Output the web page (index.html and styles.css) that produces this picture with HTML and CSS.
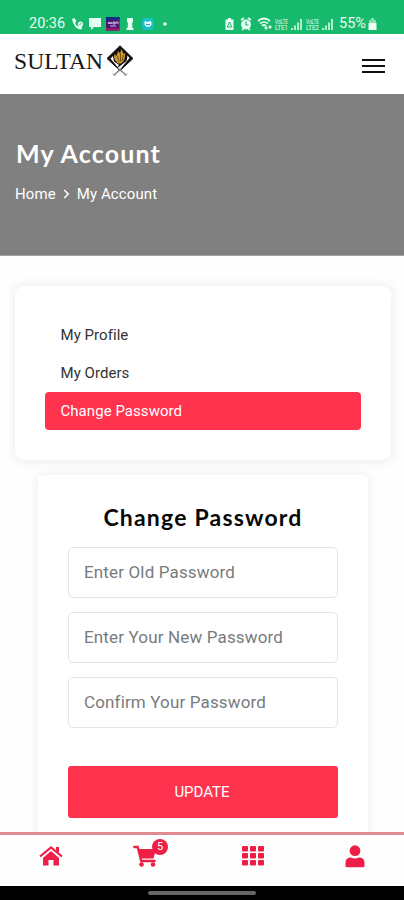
FILE: index.html
```
<!DOCTYPE html>
<html lang="en">
<head>
<meta charset="utf-8">
<meta name="viewport" content="width=device-width, initial-scale=1">
<title>My Account</title>
<link rel="stylesheet" href="styles.css">
</head>
<body>
<div class="status">
  <span class="clock">20:36</span>
  <svg class="notices" width="98" height="16" viewBox="0 0 98 16" fill="#e6fff0">
    <path d="M1 3l2.500-1 2 3.500-1.500 1q1 3 3 4l1.500-1.500 3 2.500-1.500 2Q3 13 1 3z"/>
    <circle cx="9.500" cy="8" r="2.600"/><path d="M8.300 9.200l2.400-2.400" stroke="#17b96c"/>
    <path d="M18 2h12v9h-7l-3 3v-3h-2z"/>
    <rect x="35" y="1" width="13.500" height="13.500" fill="#4a176f"/>
    <path d="M35 1h13.500v3H35z" fill="#142b83"/><path d="M35 12h13.500v2.500H35z" fill="#9b1767"/>
    <path d="M37 6l1 2 1-2 1 2 1-2M42 6h2v2h-2zM45 8V6h2v2M39 10h6" fill="none" stroke="#e4cdf1" stroke-width=".9"/>
    <path d="M56 2h6v4l-1 1 .5 5h1v2h-7v-2h1l.5-5-1-1z"/>
    <rect x="71" y="2" width="12" height="12" rx="3" fill="#18bfc4"/>
    <path d="M73.500 5l3 1 3-1 1 1v3q-3.500 4-7 0z" fill="#eaffff"/><path d="M75 8q2 2 4 0" fill="none" stroke="#147fae"/>
    <circle cx="94" cy="8" r="1.800"/>
  </svg>
  <svg class="signals" width="112" height="16" viewBox="0 0 112 16" fill="#e6fff0">
    <path d="M4 2h3v1.500h2.500V14h-8V3.500H4z"/><path d="M5.500 6l2.300 5H3.200z" fill="none" stroke="#17b96c"/>
    <circle cx="22" cy="8.500" r="5"/><path d="M17 4l3-2M27 4l-3-2M18 14l2-2M26 14l-2-2" stroke="#e6fff0" stroke-width="1.700"/>
    <path d="M22 5.500V9h2.500" fill="none" stroke="#17b96c" stroke-width="1.200"/>
    <path d="M34 5q6-5 12 0M36 7.500q4-3 8 0M38 10q2-2 4 0" fill="none" stroke="#e6fff0" stroke-width="1.700"/>
    <path d="M42 10v3l-1.500-1.500M42 13l1.500-1.500M46 13v-3l-1.500 1.500M46 10l1.500 1.500" fill="none" stroke="#e6fff0" stroke-width="1.100"/>
    <text x="51" y="7.500" class="tiny" textLength="13" lengthAdjust="spacingAndGlyphs">VoLTE</text><text x="51" y="14" class="tiny" textLength="13">LTE1</text>
    <path d="M67 14v-2h2v2zM70 14v-4.500h2V14zM73 14V6.500h2V14zM76 14V3h2v11z" opacity=".75"/>
    <text x="82" y="7.500" class="tiny" textLength="13" lengthAdjust="spacingAndGlyphs">VoLTE</text><text x="82" y="14" class="tiny" textLength="13">LTE2</text>
    <path d="M98 14v-2h2v2zM101 14v-4.500h2V14zM104 14V6.500h2V14zM107 14V3h2v11z" opacity=".75"/>
  </svg>
  <span class="percent">55%</span>
  <svg class="battery" width="9" height="14" viewBox="0 0 9 14"><path d="M3 1h3v2h2v10H1V3h2z" fill="#8cdfb1"/><path d="M.5 6h8v7h-8z" fill="#f0fff6"/></svg>
</div>
<header class="header">
  <svg class="logo" width="121" height="34" viewBox="0 0 121 34">
    <text x="0" y="23.500" class="brand" textLength="89">SULTAN</text>
    <path d="M106 .8L119 13.500 106 25.500 93 13.500z" fill="#111" stroke="#111" stroke-width="1" stroke-linejoin="round"/>
    <path d="M96.500 13.500l2.500-2.500 1 5.500 5 3.500-1.500 2zM115.500 13l-2-2.500-1 5.500-9 7 2.500 1.500z" fill="#fff"/>
    <path d="M104 18.500q-5-4-3.500-9.500l2 2 1.500-5 2 2.500 1.500-4.500 2 5 1.500-1q1 7-4 10.500z" fill="#d09a2d"/>
    <path d="M103.500 11l1.500 6M106.500 8.500v8M109.500 10l-1.500 6" stroke="#49340d" stroke-width=".7"/>
    <path d="M99.500 30.500l8-7M112.500 30.500l-8-7" stroke="#777" stroke-width="1.200"/>
    <path d="M98.500 28l3 3M113.500 28l-3 3" stroke="#aaa" stroke-width="1"/>
  </svg>
  <button class="menu" aria-label="Menu"><i></i><i></i><i></i></button>
</header>
<section class="hero">
  <h1>My Account</h1>
  <div class="crumbs"><span>Home</span><svg width="7" height="10" viewBox="0 0 7 10"><path d="M1.200 1l4 4-4 4" fill="none" stroke="#fff" stroke-width="1.500"/></svg><span>My Account</span></div>
</section>
<main class="content">
  <nav class="account"><a>My Profile</a><a>My Orders</a><a class="active">Change Password</a></nav>
  <form class="password">
    <h2>Change Password</h2>
    <input type="password" placeholder="Enter Old Password">
    <input type="password" placeholder="Enter Your New Password">
    <input type="password" placeholder="Confirm Your Password">
    <button type="button">UPDATE</button>
  </form>
</main>
<nav class="tabs">
  <a><svg width="24" height="20" viewBox="0 0 24 20"><path d="M1 10.500L12 1.500l11 9" fill="none" stroke="#ee1e46" stroke-width="2.200"/><path d="M17 1h3v6l-3-2.500zM12 5l8 7v7.500h-5.500V14h-5v5.500H4V12z" fill="#ee1e46"/></svg></a>
  <a class="cart"><svg width="24" height="22" viewBox="0 0 24 22"><path d="M1.200 2h3.500l3.500 14h13.500" fill="none" stroke="#ee1e46" stroke-width="2.300" stroke-linecap="round"/><path d="M5 4h18l-2.500 9.500H8z" fill="#ee1e46"/><circle cx="8.500" cy="19.500" r="2.300" fill="#ee1e46"/><circle cx="20" cy="19.500" r="2.300" fill="#ee1e46"/></svg><b>5</b></a>
  <a><svg width="22" height="20" viewBox="0 0 22 20" fill="#ee1e46"><rect width="6" height="5.600" rx="1"/><rect x="8" width="6" height="5.600" rx="1"/><rect x="16" width="6" height="5.600" rx="1"/><rect y="7" width="6" height="5.600" rx="1"/><rect x="8" y="7" width="6" height="5.600" rx="1"/><rect x="16" y="7" width="6" height="5.600" rx="1"/><rect y="14" width="6" height="5.600" rx="1"/><rect x="8" y="14" width="6" height="5.600" rx="1"/><rect x="16" y="14" width="6" height="5.600" rx="1"/></svg></a>
  <a class="user"><svg width="20" height="23" viewBox="0 0 20 23" fill="#ee1e46"><circle cx="10" cy="5.700" r="5.400"/><path d="M.5 21v-3q0-5.500 5.500-5.500 4 2 8 0 5.500 0 5.500 5.500v3q0 1.300-1.500 1.300H2Q.5 22.300.5 21z"/></svg></a>
</nav>
<div class="gesture"><i></i></div>
</body>
</html>
```
FILE: styles.css
```
* { box-sizing: border-box; }
body { margin: 0; width: 404px; height: 900px; overflow: hidden; display: flex; flex-direction: column; background: #fefefe; font-family: Roboto, sans-serif; color: #333; }
.status { flex: none; height: 34px; padding: 14px 26px 0 29px; display: flex; align-items: center; background: #17b96c; color: #e6fff0; }
.clock { width: 36px; font-size: 14.5px; line-height: 18px; white-space: nowrap; }
.notices { margin-left: 6px; flex: none; }
.signals { margin-left: 55px; flex: none; }
.tiny { font: 6.5px Roboto, sans-serif; }
.percent { margin-left: 3px; width: 29px; font-size: 14.5px; line-height: 18px; }
.battery { flex: none; }
.header { flex: none; height: 60px; display: flex; align-items: center; justify-content: space-between; padding: 0 19px 0 14px; background: #fff; }
.logo { margin-top: -4px; }
.brand { font: 23.5px "Liberation Serif", serif; fill: #171717; }
.menu { width: 23px; margin-top: 4px; padding: 0; border: 0; background: none; display: flex; flex-direction: column; gap: 4px; }
.menu i { height: 2.3px; background: #111; }
.hero { flex: none; height: 162px; padding: 44px 15px 0; background: #808080; color: #fff; border-bottom: 1px solid #a3a3a3; }
h1, h2 { margin: 0; font-family: Lato, sans-serif; font-weight: 700; white-space: nowrap; }
h1 { padding-left: 1px; font-size: 25px; line-height: 30px; letter-spacing: 1.15px; }
.crumbs { margin-top: 17px; display: flex; align-items: center; gap: 7px; font-size: 15px; line-height: 18px; letter-spacing: .1px; }
.content { flex: 1; min-height: 0; overflow: hidden; padding: 30px 13px 0 15px; }
.account { height: 174px; padding: 30px; border-radius: 9px; background: #fff; box-shadow: 0 0 9px 3px rgba(0,0,0,.055); }
.account a { display: block; height: 38px; padding-left: 15.5px; border-radius: 4px; font-size: 15px; line-height: 38px; letter-spacing: .05px; }
.account .active { background: #ff334e; color: #fff; }
.password { width: 330px; height: 390px; margin: 15px 0 0 23px; padding: 27px 30px; border-radius: 5px; background: #fff; box-shadow: 0 0 9px 3px rgba(0,0,0,.045); }
h2 { color: #080808; font-size: 23px; line-height: 30px; letter-spacing: 1.2px; text-align: center; }
.password input { display: block; width: 270px; height: 51px; margin: 15px 0 0; padding: 0 15px 2px; border: 1px solid #e2e4e5; border-radius: 5px; background: #fff; font: 17px Roboto, sans-serif; letter-spacing: .15px; }
.password input + input { margin-top: 14px; }
.password input::placeholder { color: #777b7e; opacity: 1; }
.password button { display: block; width: 270px; height: 52px; margin-top: 38px; padding: 0 2px 1px 0; border: 0; border-radius: 3px; background: #ff334e; color: #fff; font: 15px Roboto, sans-serif; }
.tabs { flex: none; height: 54px; padding: 9px 15px 0 0; display: grid; grid-template-columns: repeat(4, 101px); border-top: 3px solid #e28a96; background: #fefefe; }
.tabs a { height: 24px; display: flex; align-items: center; justify-content: center; }
.tabs .cart { position: relative; right: 7px; }
.tabs .user { padding-left: 2px; }
.cart b { position: absolute; top: -5px; right: 27px; width: 16px; height: 16px; border-radius: 50%; background: #ee1e46; color: #fff; font-size: 11px; font-weight: 400; line-height: 16px; text-align: center; }
.gesture { flex: none; height: 14px; display: flex; justify-content: center; background: #000; }
.gesture i { width: 108px; height: 4px; margin-top: 5px; border-radius: 2px; background: #666; }
```
